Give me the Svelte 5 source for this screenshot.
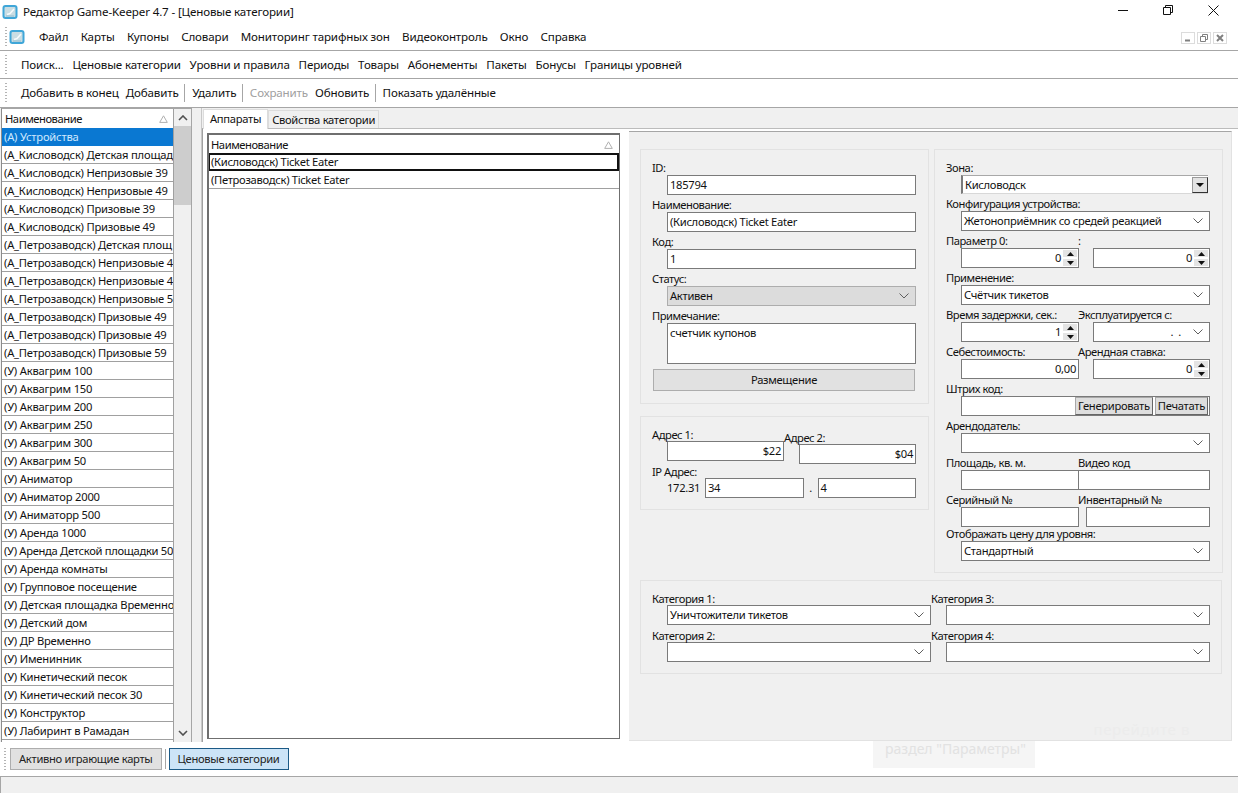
<script>
  const menu = ['Файл','Карты','Купоны','Словари','Мониторинг тарифных зон','Видеоконтроль','Окно','Справка'];
  const bar2 = ['Поиск...','Ценовые категории','Уровни и правила','Периоды','Товары','Абонементы','Пакеты','Бонусы','Границы уровней'];
  const list = ['(А) Устройства','(А_Кисловодск) Детская площад','(А_Кисловодск) Непризовые 39','(А_Кисловодск) Непризовые 49','(А_Кисловодск) Призовые 39','(А_Кисловодск) Призовые 49','(А_Петрозаводск) Детская площ','(А_Петрозаводск) Непризовые 4','(А_Петрозаводск) Непризовые 4','(А_Петрозаводск) Непризовые 5','(А_Петрозаводск) Призовые 49','(А_Петрозаводск) Призовые 49','(А_Петрозаводск) Призовые 59','(У) Аквагрим 100','(У) Аквагрим 150','(У) Аквагрим 200','(У) Аквагрим 250','(У) Аквагрим 300','(У) Аквагрим 50','(У) Аниматор','(У) Аниматор 2000','(У) Аниматорр 500','(У) Аренда 1000','(У) Аренда Детской площадки 50','(У) Аренда комнаты','(У) Групповое посещение','(У) Детская площадка Временно','(У) Детский дом','(У) ДР Временно','(У) Именинник','(У) Кинетический песок','(У) Кинетический песок 30','(У) Конструктор','(У) Лабиринт в Рамадан'];
</script>

{#snippet logo(s)}
  <svg width={s} height={s} viewBox="0 0 16 16" class="logo">
    <rect x="0.5" y="1" width="15" height="14" rx="3" fill="#3fa6d8"/>
    <rect x="2.5" y="3" width="11" height="10" rx="1" fill="#c9dde3"/>
    <path d="M5 10.5 L8 9.5 L12 5" stroke="#f7fbfc" stroke-width="1.5" fill="none"/>
    <path d="M4 12 H12" stroke="#8fbcd0" stroke-width="1" fill="none"/>
  </svg>
{/snippet}
{#snippet chev()}
  <svg class="chev" width="10" height="6" viewBox="0 0 10 6"><path d="M0.5 0.5 L5 5 L9.5 0.5" fill="none" stroke="#5f5f5f"/></svg>
{/snippet}
{#snippet combo(text, cls = '')}
  <div class={'ctl combo ' + cls}><span>{text}</span>{@render chev()}</div>
{/snippet}
{#snippet spin(text)}
  <div class="ctl num"><span>{text}</span>
    <div class="spin">
      <i><svg width="7" height="4" viewBox="0 0 7 4"><path d="M3.5 0 L7 4 H0 Z" fill="#111"/></svg></i>
      <i><svg width="7" height="4" viewBox="0 0 7 4"><path d="M0 0 H7 L3.5 4 Z" fill="#111"/></svg></i>
    </div>
  </div>
{/snippet}
{#snippet sortmark()}
  <svg class="sort" width="9" height="8" viewBox="0 0 9 8"><path d="M4.5 0.8 L8.3 7.4 H0.7 Z" fill="none" stroke="#b0b0b0"/></svg>
{/snippet}

<div class="app">
  <header class="title">
    {@render logo(16)}
    <span class="ttext">Редактор Game-Keeper 4.7 - [Ценовые категории]</span>
    <div class="winbtns">
      <svg width="10" height="10" viewBox="0 0 10 10"><path d="M0 5.5 H10" stroke="#111"/></svg>
      <svg width="10" height="10" viewBox="0 0 10 10"><path d="M0.5 2.5 H7.5 V9.5 H0.5 Z M2.5 2.5 V0.5 H9.5 V7.5 H7.5" fill="none" stroke="#111"/></svg>
      <svg width="11" height="11" viewBox="0 0 11 11"><path d="M0.5 0.5 L10.5 10.5 M10.5 0.5 L0.5 10.5" stroke="#111"/></svg>
    </div>
  </header>

  <nav class="bar menu">
    <span class="grip"></span>
    <span class="menulogo">{@render logo(16)}</span>
    <div class="items">{#each menu as m}<span>{m}</span>{/each}</div>
    <div class="mdi">
      <i><svg width="8" height="8" viewBox="0 0 8 8"><path d="M1 6.5 H6" stroke="#808080" stroke-width="2"/></svg></i>
      <i><svg width="8" height="8" viewBox="0 0 8 8"><path d="M0.5 2.5 H5.5 V7.5 H0.5 Z M2.5 2.5 V0.5 H7.5 V5.5 H5.5" fill="none" stroke="#808080"/></svg></i>
      <i><svg width="8" height="8" viewBox="0 0 8 8"><path d="M1 1 L7 7 M7 1 L1 7" stroke="#808080" stroke-width="2"/></svg></i>
    </div>
  </nav>

  <nav class="bar two">
    <span class="grip"></span>
    <div class="items">{#each bar2 as m}<span>{m}</span>{/each}</div>
  </nav>

  <nav class="bar three">
    <span class="grip"></span>
    <div class="items">
      <span>Добавить в конец</span><span>Добавить</span><b></b>
      <span>Удалить</span><b></b>
      <span class="off">Сохранить</span><span>Обновить</span><b></b>
      <span>Показать удалённые</span>
    </div>
  </nav>

  <main>
    <section class="left">
      <div class="listwrap">
        <div class="lhead"><span>Наименование</span>{@render sortmark()}</div>
        {#each list as row, i}
          <div class="lrow" class:sel={i === 0} class:tight={row.length >= 30}>{row}</div>
        {/each}
      </div>
      <div class="scroll">
        <svg class="arrow" width="10" height="6" viewBox="0 0 10 6"><path d="M1 5 L5 1 L9 5" fill="none" stroke="#505050" stroke-width="1.6"/></svg>
        <div class="thumb"></div>
        <svg class="arrow down" width="10" height="6" viewBox="0 0 10 6"><path d="M1 1 L5 5 L9 1" fill="none" stroke="#505050" stroke-width="1.6"/></svg>
      </div>
    </section>

    <section class="right">
      <div class="tabs">
        <span class="tab on">Аппараты</span>
        <span class="tab">Свойства категории</span>
      </div>
      <div class="page">
        <div class="grid">
          <div class="ghead"><span>Наименование</span>{@render sortmark()}</div>
          <div class="grow cur">(Кисловодск) Ticket Eater</div>
          <div class="grow">(Петрозаводск) Ticket Eater</div>
        </div>

        <div class="panel">
          <div class="cols">
            <div class="col">
              <div class="group g1">
                <div class="lab">ID:</div><div class="ctl in">185794</div>
                <div class="lab">Наименование:</div><div class="ctl in">(Кисловодск) Ticket Eater</div>
                <div class="lab">Код:</div><div class="ctl in">1</div>
                <div class="lab">Статус:</div>{@render combo('Активен', 'dis')}
                <div class="lab">Примечание:</div><div class="ctl in note">счетчик купонов</div>
                <div class="wbtn">Размещение</div>
              </div>
              <div class="group g2">
                <div class="addr">
                  <div><div class="lab">Адрес 1:</div><div class="ctl in numt">$22</div></div>
                  <div class="second"><div class="lab">Адрес 2:</div><div class="ctl in numt">$04</div></div>
                </div>
                <div class="lab ip">IP Адрес:</div>
                <div class="iprow"><span class="ipt">172.31</span><div class="ctl in">34</div><span class="dot">.</span><div class="ctl in">4</div></div>
              </div>
            </div>

            <div class="group gr">
              <div class="lab">Зона:</div>
              <div class="ctl zone"><span>Кисловодск</span><i><svg width="8" height="4" viewBox="0 0 8 4"><path d="M0 0 H8 L4 4 Z" fill="#111"/></svg></i></div>
              <div class="lab">Конфигурация устройства:</div>{@render combo('Жетоноприёмник со средей реакцией')}
              <div class="pair">
                <div><div class="lab">Параметр 0:</div>{@render spin('0')}</div>
                <div><div class="lab">:</div>{@render spin('0')}</div>
              </div>
              <div class="lab">Применение:</div>{@render combo('Счётчик тикетов')}
              <div class="pair">
                <div><div class="lab">Время задержки, сек.:</div>{@render spin('1')}</div>
                <div><div class="lab">Эксплуатируется с:</div><div class="ctl combo date"><span>.&nbsp;&nbsp;.</span>{@render chev()}</div></div>
              </div>
              <div class="pair">
                <div><div class="lab">Себестоимость:</div><div class="ctl in numt">0,00</div></div>
                <div><div class="lab">Арендная ставка:</div>{@render spin('0')}</div>
              </div>
              <div class="lab">Штрих код:</div>
              <div class="ctl bar-code"><span class="fill"></span><span class="bb">Генерировать</span><span class="bb">Печатать</span></div>
              <div class="lab">Арендодатель:</div>{@render combo('')}
              <div class="pair">
                <div><div class="lab">Площадь, кв. м.</div><div class="ctl in"></div></div>
                <div class="tight"><div class="lab">Видео код</div><div class="ctl in"></div></div>
              </div>
              <div class="pair">
                <div><div class="lab">Серийный №</div><div class="ctl in"></div></div>
                <div class="mid"><div class="lab">Инвентарный №</div><div class="ctl in"></div></div>
              </div>
              <div class="lab short">Отображать цену для уровня:</div>{@render combo('Стандартный')}
            </div>
          </div>

          <div class="group cats">
            <div><div class="lab">Категория 1:</div>{@render combo('Уничтожители тикетов')}</div>
            <div><div class="lab">Категория 3:</div>{@render combo('')}</div>
            <div><div class="lab">Категория 2:</div>{@render combo('')}</div>
            <div><div class="lab">Категория 4:</div>{@render combo('')}</div>
          </div>
        </div>
      </div>
    </section>
  </main>

  <div class="taskbar">
    <span class="grip"></span>
    <span class="tb">Активно играющие карты</span>
    <b></b>
    <span class="tb act">Ценовые категории</span>
  </div>
  <footer class="status"></footer>

  <div class="ghost g-a"><span>раздел "Параметры"</span></div>
  <div class="ghost g-b"><span>перейдите в</span></div>
</div>

<style>
  :global(body) { margin: 0; background: #fff; }
  .app {
    position: relative; width: 1238px; height: 794px; overflow: hidden;
    display: flex; flex-direction: column; background: #fff; color: #111;
    font: 11.6px/16px "Noto Sans", "Liberation Sans", sans-serif; letter-spacing: -0.15px;
  }
  .title { height: 24px; flex: none; display: flex; align-items: center; padding-left: 2px; gap: 5px; box-sizing: border-box; }
  .ttext { flex: 1; }
  .logo { display: block; }
  .winbtns { display: flex; align-items: center; gap: 35px; padding-right: 19px; margin-top: -4px; }

  .bar { flex: none; display: flex; align-items: center; box-sizing: border-box; border-bottom: 1px solid #a6a6a6; position: relative; }
  .grip { flex: none; width: 2px; height: 20px; margin-left: 5px; background: repeating-linear-gradient(to bottom, #b4b4b4 0 1px, transparent 1px 3px); }
  .items { display: flex; align-items: center; }
  .menu { height: 27px; }
  .menulogo { margin-left: 2px; width: 16px; }
  .menu .items { margin-left: 14px; gap: 12.3px; flex: 1; }
  .mdi { display: flex; gap: 2px; padding-right: 11px; margin-top: 2px; }
  .mdi i { width: 14px; height: 12px; border: 1px solid #dcdcdc; display: flex; align-items: center; justify-content: center; box-sizing: border-box; }
  .two { height: 28px; }
  .two .items { margin-left: 14px; gap: 8.8px; }
  .three { height: 28px; border-bottom: 0; }
  .three .items { margin-left: 14px; gap: 7px; }
  .three b { width: 1px; height: 18px; background: #a6a6a6; margin-left: -1.5px; }
  .off { color: #a0a0a0; }

  main, .taskbar { font-size: 11.2px; letter-spacing: -0.3px; }
  main { flex: 1; min-height: 0; display: flex; background: #f0f0f0; border-top: 1px solid #a6a6a6; }
  .left { width: 191px; margin-left: 1px; flex: none; display: flex; border-left: 1px solid #8c8c8c; border-top: 1px solid #a6a6a6; border-right: 1px solid #a6a6a6; box-sizing: border-box; background: #fff; overflow: hidden; }
  .listwrap { width: 171px; flex: none; overflow: hidden; border-right: 1px solid #a0a0a0; box-sizing: content-box; }
  .lhead { height: 19px; display: flex; align-items: center; justify-content: space-between; padding: 1px 5px 0 3px; box-sizing: border-box; letter-spacing: -0.45px; }
  .lrow { height: 18px; line-height: 18px; box-sizing: border-box; border-bottom: 1px solid #a0a0a0; padding-left: 2px; white-space: nowrap; overflow: hidden; letter-spacing: -0.2px; }
  .lrow.tight { letter-spacing: -0.3px; }
  .lrow.sel { background: #0a78d2; color: #cfe9ff; border-bottom-color: #0a78d2; }
  .scroll { flex: 1; background: #f0f0f0; display: flex; flex-direction: column; align-items: center; position: relative; }
  .arrow { margin: 6px 0 5px; flex: none; }
  .arrow.down { margin-top: auto; margin-bottom: 6px; }
  .thumb { width: 100%; height: 79px; background: #cdcdcd; }

  .right { flex: 1; min-width: 0; margin-left: 9px; display: flex; flex-direction: column; border-left: 1px solid #c8c8c8; }
  .tabs { height: 20px; flex: none; display: flex; align-items: flex-end; padding-left: 1px; background: #f0f0f0; }
  .tab { height: 17px; padding: 0 3px; line-height: 17px; background: #f0f0f0; border: 1px solid #dcdcdc; border-bottom: 0; box-sizing: content-box; }
  .tab.on { height: 19px; line-height: 17px; background: #fff; padding: 0 6px; margin-bottom: -1px; position: relative; }
  .page { flex: 1; min-height: 0; background: #fff; border-top: 1px solid #bcbcbc; border-left: 1px solid #a0a0a0; display: flex; padding: 4px 6px 1px 4px; gap: 9px; box-sizing: border-box; }
  .grid { width: 413px; flex: none; margin-bottom: 2px; box-sizing: border-box; border: 2px solid #6f6f6f; border-right-width: 1px; border-bottom-width: 1px; }
  .ghead { height: 18px; display: flex; align-items: center; justify-content: space-between; padding: 1px 6px 0 2px; box-sizing: border-box; letter-spacing: -0.45px; }
  .grow { height: 18px; line-height: 17px; padding-left: 2px; box-sizing: border-box; border-bottom: 1px solid #a0a0a0; white-space: nowrap; }
  .grow.cur { border: 2px solid #111; border-left-width: 1px; line-height: 14px; padding-left: 1px; }
  .panel { flex: 1; min-width: 0; background: #f0f0f0; border-top: 1px solid #a6a6a6; margin-top: -2px; padding: 17px 9px 0 11px; border-right: 1px solid #e2e2e2; border-bottom: 1px solid #e2e2e2; box-sizing: border-box; }
  .cols { display: flex; gap: 5px; align-items: flex-start; margin-bottom: 7px; }
  .col { width: 289px; flex: none; display: flex; flex-direction: column; gap: 12px; }
  .group { border: 1px solid #e2e2e2; box-sizing: border-box; padding: 8px 12px 0 11px; background: #f0f0f0; }
  .g1 { height: 255px; }
  .g2 { height: 94px; padding-top: 5px; }
  .gr { width: 289px; height: 424px; flex: none; }

  .lab { height: 17px; padding-top: 3px; line-height: 14px; box-sizing: border-box; white-space: nowrap; letter-spacing: -0.45px; }
  .lab.short { height: 14px; padding-top: 0; }
  .ctl { height: 20px; margin-left: 15px; box-sizing: border-box; border: 1px solid #7a7a7a; background: #fff; line-height: 18px; white-space: nowrap; }
  .in { padding-left: 2px; line-height: 17px; }
  .numt { text-align: right; padding: 0 2px 0 0; }
  .note { height: 41px; padding-top: 1px; line-height: 16px; }
  .combo { display: flex; align-items: center; justify-content: space-between; padding: 0 2px; }
  .chev { margin-right: 4px; flex: none; }
  .dis { background: #dcdcdc; border-color: #adadad; }
  .wbtn { height: 22px; margin: 5px 1px 0; border: 1px solid #adadad; background: #e1e1e1; text-align: center; line-height: 20px; box-sizing: border-box; }
  .zone { display: flex; align-items: center; justify-content: space-between; padding-left: 2px; margin-right: 2px; height: 19px; border-left: 2px solid #7a7a7a; border-top: 1px solid #a8a8a8; border-right: 0; border-bottom: 1px solid #d8d8d8; }
  .zone i { width: 16px; height: 16px; background: #e3e3e3; border: 1px solid #9a9a9a; border-right-color: #333; border-bottom-color: #333; box-sizing: border-box; display: flex; align-items: center; justify-content: center; }
  .pair { display: grid; grid-template-columns: 132px 132px; }
  .pair > div:first-child .ctl { margin-right: -1px; }
  .tight .ctl { margin-left: 0; }
  .mid .ctl { margin-left: 8px; }
  .num { display: flex; justify-content: flex-end; }
  .spin { width: 16px; flex: none; display: flex; flex-direction: column; margin-left: 1px; }
  .spin i { flex: 1; background: #e4e4e4; border: 1px solid #fff; box-sizing: border-box; display: flex; align-items: center; justify-content: center; }
  .date span { margin-left: auto; margin-right: 12px; }
  .bar-code { display: flex; align-items: stretch; padding: 0 1px; gap: 2px; }
  .fill { flex: 1; }
  .bb { background: #dedede; border: 1px solid #a8a8a8; border-right-color: #666; border-bottom-color: #666; line-height: 16px; box-sizing: border-box; padding: 0 2px; }
  .addr { display: grid; grid-template-columns: 132px 132px; }
  .addr .lab { height: 19px; padding-top: 6px; }
  .second { margin-top: 3px; }
  .ip { margin-top: -2px; }
  .iprow { display: flex; align-items: center; padding-left: 15px; height: 20px; margin-top: -1px; }
  .iprow .ctl { margin-left: 0; flex: 1; }
  .ipt { width: 38px; flex: none; }
  .dot { width: 14px; text-align: center; flex: none; }
  .cats { width: 582px; height: 94px; display: grid; grid-template-columns: 279px 279px; align-content: start; padding-top: 7px; }
  .cats .lab { padding-top: 4px; }
  .ghost { position: absolute; background: #f5f5f5; color: #e2e2e2; }
  .g-a { left: 873px; top: 741px; width: 162px; height: 27px; font-size: 14px; letter-spacing: 0; padding-left: 12px; box-sizing: border-box; white-space: nowrap; }
  .g-b { left: 1035px; top: 721px; width: 155px; height: 16px; background: transparent; color: #ececec; font-size: 15px; letter-spacing: 0.6px; text-align: right; white-space: nowrap; }

  .taskbar { height: 31px; flex: none; display: flex; align-items: center; padding-top: 3px; box-sizing: border-box; background: #fff; }
  .taskbar .grip { height: 22px; margin-left: 4px; margin-right: 4px; }
  .tb { height: 22px; box-sizing: border-box; padding: 0 8px; line-height: 20px; background: #e1e1e1; border: 1px solid #adadad; color: #222; }
  .tb.act { background: #cce4f7; border-color: #1c5a86; }
  .taskbar b { width: 1px; height: 20px; background: #a6a6a6; margin: 0 3px; }
  .status { height: 20px; flex: none; margin-bottom: 1px; background: #f0f0f0; border-top: 3px solid #fff; box-shadow: inset 1px 1px 0 #a6a6a6; box-sizing: border-box; }
</style>
